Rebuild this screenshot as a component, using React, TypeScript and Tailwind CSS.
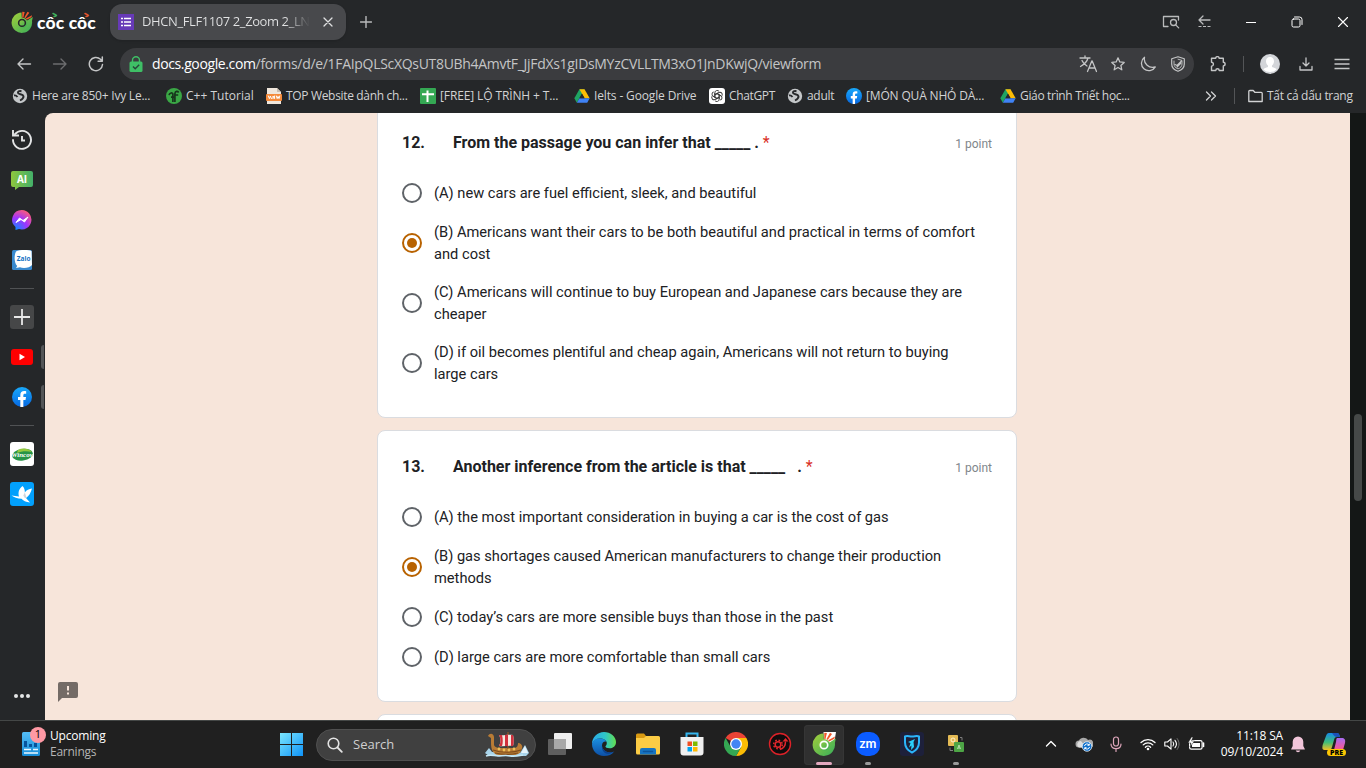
import React from "react";

type Kids = { children?: React.ReactNode };

const line = {
  fill: "none",
  stroke: "currentColor",
  strokeLinecap: "round" as const,
  strokeLinejoin: "round" as const,
};

/* ---------- brand marks ---------- */

function CocCocMark({ size, gap, id }: { size: number; gap: string; id: string }) {
  return (
    <svg width={size} height={size} viewBox="0 0 24 24">
      <defs>
        <linearGradient id={id} x1="0" y1="0" x2="1" y2="1">
          <stop offset="0" stopColor="#a5cf3a" />
          <stop offset="1" stopColor="#35ad5b" />
        </linearGradient>
      </defs>
      <path d="M11.500 0H24L22 12l-10 1z" fill={gap} />
      <path fill={`url(#${id})`} d="M11.500 1.500A11.200 11.200 0 1 0 22.900 11L23.800 6.500l-5.800 3.700-6 2.800z" />
      <circle cx="12" cy="13" r="6" fill={`url(#${id})`} />
      <circle cx="12" cy="13" r="3.700" fill="none" stroke={gap} strokeWidth="1.700" />
      <path d="M12.300.8l2.600.3-1.400 6h-1.300z" fill="#f0592a" />
      <path d="M18 .8l2 1.200-4.300 6-1.200-.9z" fill="#f0592a" />
      <path d="M23 4.500l-.6 2.300-5.300 2.700-.9-1.200z" fill="#f0592a" />
    </svg>
  );
}

function Globe() {
  return (
    <svg width="16" height="16" viewBox="0 0 16 16">
      <circle cx="8" cy="8" r="7.200" fill="#c4c7c9" />
      <path
        d="M9.500 3.200c-2.500-.5-4 .300-3.500 1.800.5 1.600 5 1 5.500 3.200.3 1.800-1.500 3.300-3.500 4.300M2 7.500c1.500-.5 2.500.2 3.500 1.500"
        fill="none"
        stroke="#27292b"
        strokeWidth="1.900"
      />
    </svg>
  );
}

function FacebookMark({ size, id }: { size: number; id: string }) {
  return (
    <svg width={size} height={size} viewBox="0 0 24 24">
      <defs>
        <linearGradient id={id} x1="0" y1="0" x2="0" y2="1">
          <stop offset="0" stopColor="#19a9fb" />
          <stop offset="1" stopColor="#0668e1" />
        </linearGradient>
      </defs>
      <circle cx="12" cy="12" r="12" fill={`url(#${id})`} />
      <path
        d="M10 24v-8.300H7.200V12H10V9.800c0-3.200 1.700-4.900 4.600-4.900.9 0 1.700.1 2.400.2v3.100h-1.500c-1.400 0-1.900.7-1.900 1.900V12h3.200l-.6 3.700h-2.600V24z"
        fill="#fff"
      />
    </svg>
  );
}

function Drive() {
  return (
    <svg width="16" height="16" viewBox="0 0 24 24">
      <path d="M8.200 2h7.600L8 15.500 4.200 22 .5 15.500z" fill="#1fa463" />
      <path d="M8.200 2h7.600l7.700 13.500h-7.600z" fill="#fcbc05" />
      <path d="M8.100 15.500h15.400L19.800 22H4.300z" fill="#3f82f5" />
      <path d="M12 8.600l3.900 6.900H8.100z" fill="#27292b" />
    </svg>
  );
}

function Cpp() {
  return (
    <svg width="16" height="16" viewBox="0 0 16 16">
      <circle cx="8" cy="8" r="8" fill="#3aa745" />
      <path
        d="M6.900 14V6.200c0-1.900-3.600-1.600-3.800.9M8.900 14V5.600c.3-2.600 2.700-2.800 3.800-1.200M5 9.200h3M9 7h3.200"
        fill="none"
        stroke="#17351c"
        strokeWidth="1.700"
      />
    </svg>
  );
}

function DocMark() {
  return (
    <svg width="16" height="16" viewBox="0 0 16 16">
      <path d="M1 0h10l4 4v12H1z" fill="#efe6dc" />
      <path d="M11 0l4 4h-4z" fill="#c9bdb0" />
      <rect y="6" width="16" height="7" rx="1" fill="#f58a3a" />
      <path d="M2.400 8l1 2.600 1-2.600 1 2.600M7 10.600V8l1.600 2.600V8M10.400 8l.8 2.600L12 8.400l1 2.200.8-2.600" {...line} stroke="#fff" strokeWidth="1" />
    </svg>
  );
}

function Sheets() {
  return (
    <svg width="16" height="16" viewBox="0 0 16 16">
      <rect width="16" height="16" rx="1" fill="#34a853" />
      <path d="M2 6.200h12M7.500 2.500v11.500" stroke="#fff" strokeWidth="2" />
    </svg>
  );
}

function Gpt() {
  return (
    <svg width="16" height="16" viewBox="0 0 16 16">
      <rect width="16" height="16" rx="3" fill="#fff" />
      <g fill="none" stroke="#333" strokeWidth="0.9">
        {[0, 60, 120, 180, 240, 300].map((a) => (
          <path key={a} transform={`rotate(${a} 8 8)`} d="M5.900 9.200V4.700a2.300 2.300 0 0 1 4.300-1.100M8 5.500l3.700 2.100" />
        ))}
      </g>
    </svg>
  );
}

/* ---------- browser chrome ---------- */

function TabStrip() {
  return (
    <div className="flex h-11 shrink-0 items-center">
      <div className="flex w-[110px] items-center pl-[11px]">
        <CocCocMark size={22} gap="#252729" id="cc1" />
        <span className="relative ml-1 mt-0.5 font-['Lato'] text-[17.5px] leading-5 font-black tracking-[0.15px] whitespace-nowrap text-white">
          côc côc
          <svg className="absolute -top-px left-0" width="62" height="8" viewBox="0 0 62 8">
            <path d="M16 1.500l3 1.500M17 4.500c1 0 2-.5 2.500-1" {...line} stroke="#3fae5a" strokeWidth="1.500" />
            <path d="M48 1.500l3 1.500M49 4.500c1 0 2-.5 2.500-1" {...line} stroke="#e0532c" strokeWidth="1.500" />
          </svg>
        </span>
      </div>
      <div className="flex h-9 w-[236px] items-center rounded-xl bg-[#48494c] pr-3 pl-2 shadow">
        <svg width="16" height="16" viewBox="0 0 16 16">
          <rect width="16" height="16" fill="#673ab7" />
          <path d="M3 4.500h2M3 8h2M3 11.500h2M6 4.500h7M6 8h7M6 11.500h7" stroke="#fff" strokeWidth="1.700" />
        </svg>
        <span className="ml-2 w-[168px] bg-gradient-to-r from-[#e3e4e5] from-85% to-transparent bg-clip-text text-[13px] tracking-[-0.4px] whitespace-nowrap text-transparent">
          DHCN_FLF1107 2_Zoom 2_LN
        </span>
        <svg className="ml-3" width="12" height="12" viewBox="0 0 12 12">
          <path d="M2 2l8 8M10 2l-8 8" {...line} stroke="#dfe0e1" strokeWidth="1.300" />
        </svg>
      </div>
      <svg className="ml-[14px] text-[#b9babb]" width="12" height="12" viewBox="0 0 12 12">
        <path d="M6 .5v11M.5 6h11" {...line} strokeWidth="1.400" />
      </svg>
      <div className="ml-auto flex items-center text-[#b9babb]">
        <svg width="18" height="14" viewBox="0 0 18 14">
          <path d="M6 11.500H1.500v-10h15V5" {...line} strokeWidth="1.300" />
          <circle cx="11.500" cy="7.500" r="3" {...line} strokeWidth="1.300" />
          <path d="M13.700 9.900l3 3" {...line} strokeWidth="1.300" />
        </svg>
        <svg className="ml-[17px]" width="16" height="14" viewBox="0 0 16 14">
          <path d="M13 5H2M6 1L2 5l4 4" {...line} strokeWidth="1.300" />
          <path d="M1.500 11.500H14" stroke="currentColor" strokeWidth="1.200" strokeDasharray="3 1.500" />
        </svg>
        <svg className="ml-8 text-white" width="12" height="12" viewBox="0 0 12 12">
          <path d="M1 6.500h10" stroke="currentColor" />
        </svg>
        <svg className="ml-[34px] text-white" width="12" height="12" viewBox="0 0 12 12">
          <rect x="1" y="3" width="8" height="8" rx="1.500" {...line} />
          <path d="M3.500 1H8.500a2.500 2.500 0 0 1 2.500 2.500V8.500" {...line} />
        </svg>
        <svg className="mr-[17px] ml-[34px] text-white" width="12" height="12" viewBox="0 0 12 12">
          <path d="M1.500 1.500l9 9M10.500 1.500l-9 9" {...line} strokeWidth="1.100" />
        </svg>
      </div>
    </div>
  );
}

function Toolbar() {
  return (
    <div className="flex h-10 shrink-0 items-center text-[#c4c5c6]">
      <svg className="ml-4" width="16" height="16" viewBox="0 0 16 16">
        <path d="M14.500 8H2M7 3L2 8l5 5" {...line} strokeWidth="1.400" />
      </svg>
      <svg className="ml-5 text-[#6c6d6f]" width="16" height="16" viewBox="0 0 16 16">
        <path d="M1.500 8H14M9 3l5 5-5 5" {...line} strokeWidth="1.400" />
      </svg>
      <svg className="ml-5" width="16" height="16" viewBox="0 0 16 16">
        <path d="M14.500 8.500a6.600 6.600 0 1 1-2-5.200L14 4.900M14.300 1v4.200h-4.200" {...line} strokeWidth="1.500" />
      </svg>
      <div className="ml-4 flex h-8 w-[1074px] items-center rounded-full bg-[#3b3c3f] pr-2 pl-[9px]">
        <svg width="14" height="16" viewBox="0 0 14 16">
          <path d="M3.500 6V4.200a3.500 3.500 0 0 1 7 0V6" fill="none" stroke="#3fbf66" strokeWidth="1.400" />
          <rect x=".5" y="5.500" width="13" height="10.500" rx="1.500" fill="#3fbf66" />
          <path d="M4 10.500l2.200 2.200 4-4" fill="none" stroke="#27443a" strokeWidth="1.400" />
        </svg>
        <span className="-mt-0.5 ml-[9px] text-[14px] whitespace-nowrap">
          <span className="tracking-[-0.38px] text-white">docs.google.com</span>
          <span className="tracking-[-0.31px]">/forms/d/e/1FAIpQLScXQsUT8UBh4AmvtF_JjFdXs1gIDsMYzCVLLTM3xO1JnDKwjQ/viewform</span>
        </span>
        <svg className="ml-auto" width="18" height="18" viewBox="0 0 18 18">
          <path d="M1 3h10M6 1v2M9 3c-1 4-4 6.500-7.500 8.500M3 5.500c1 2.500 3 4.300 5 5.500" {...line} strokeWidth="1.300" />
          <path d="M8.500 16.500L12.800 6h.4l4.300 10.500M10 13h6" {...line} strokeWidth="1.300" />
        </svg>
        <svg className="ml-[13px]" width="16" height="16" viewBox="0 0 16 16">
          <path d="M8 1.800l1.800 4.100 4.400.5-3.300 3 .9 4.400L8 11.500l-3.800 2.300.9-4.400-3.300-3 4.400-.5z" {...line} strokeWidth="1.300" />
        </svg>
        <svg className="ml-[14px]" width="16" height="16" viewBox="0 0 16 16">
          <path d="M4.500 1.300a8.300 8.300 0 0 0 10.800 9.600A7.400 7.400 0 1 1 4.500 1.300z" {...line} strokeWidth="1.300" />
        </svg>
        <svg className="ml-[14px]" width="16" height="16" viewBox="0 0 16 16">
          <path d="M8 .8l6.300 2V8c0 3.700-2.500 6-6.300 7.300C4.200 14 1.700 11.700 1.700 8V2.800z" {...line} strokeWidth="1.200" />
          <path d="M8 3.200l4 1.200v3.500c0 2.400-1.400 4-4 5-2.600-1-4-2.600-4-5V5" {...line} strokeWidth=".9" />
          <path d="M5 8.500l2 1L11.500 5M7 11l4-4" {...line} strokeWidth="1.200" />
        </svg>
      </div>
      <svg className="ml-4" width="16" height="16" viewBox="0 0 16 16">
        <path
          d="M1.500 2.300h4.200a1.700 1.700 0 0 1 3.400 0h4.200v4a1.800 1.800 0 0 1 0 3.600v4.600H9.200a1.700 1.700 0 0 0-3.400 0H1.500v-4.400a1.900 1.900 0 0 0 0-3.800z"
          {...line}
          strokeWidth="1.400"
        />
      </svg>
      <span className="ml-[17px] h-4 w-px bg-[#535557]" />
      <svg className="ml-4" width="20" height="20" viewBox="0 0 20 20">
        <circle cx="10" cy="10" r="10" fill="#d3d5d9" />
        <path d="M10 3c2.700 0 4 1.800 4 4.200 0 1.800-.8 3.300-2 4.200v1.700c2 .5 3.600 1.200 4.700 2.300a10 10 0 0 1-13.400 0c1.100-1.100 2.700-1.800 4.700-2.300v-1.700c-1.200-.9-2-2.400-2-4.200C6 4.800 7.300 3 10 3z" fill="#fff" />
      </svg>
      <svg className="ml-[18px]" width="16" height="16" viewBox="0 0 16 16">
        <path d="M8 2v8M5 7l3 3 3-3M2 10.500V14h12v-3.500" {...line} strokeWidth="1.300" />
      </svg>
      <svg className="ml-5" width="16" height="16" viewBox="0 0 16 16">
        <path d="M.5 3.500h15M.5 8h15M.5 12.500h15" stroke="currentColor" strokeWidth="1.300" />
      </svg>
    </div>
  );
}

function Bookmark({ icon, width, children }: { icon: React.ReactNode; width: string } & Kids) {
  return (
    <div className={`flex shrink-0 items-center gap-1 whitespace-nowrap ${width}`}>
      {icon}
      {children}
    </div>
  );
}

function BookmarksBar() {
  return (
    <div className="flex h-[29px] shrink-0 items-center pb-[5px] pl-3 text-[12px] text-[#d2d3d4]">
      <Bookmark icon={<Globe />} width="w-[154px]"><span className="tracking-[-0.22px]">Here are 850+ Ivy Le...</span></Bookmark>
      <Bookmark icon={<Cpp />} width="w-[100px]"><span className="tracking-[0.02px]">C++ Tutorial</span></Bookmark>
      <Bookmark icon={<DocMark />} width="w-[154px]"><span className="tracking-[-0.33px]">TOP Website dành ch...</span></Bookmark>
      <Bookmark icon={<Sheets />} width="w-[154px]"><span className="tracking-[-0.12px]">[FREE] LỘ TRÌNH + T...</span></Bookmark>
      <Bookmark icon={<Drive />} width="w-[135px]"><span className="tracking-[-0.14px]">Ielts - Google Drive</span></Bookmark>
      <Bookmark icon={<Gpt />} width="w-[78px]"><span className="tracking-[-0.35px]">ChatGPT</span></Bookmark>
      <Bookmark icon={<Globe />} width="w-[59px]"><span className="tracking-[-0.3px]">adult</span></Bookmark>
      <Bookmark icon={<FacebookMark size={16} id="fb1" />} width="w-[154px]"><span className="tracking-[-0.16px]">[MÓN QUÀ NHỎ DÀ...</span></Bookmark>
      <Bookmark icon={<Drive />} width="w-[130px]"><span className="tracking-[-0.33px]">Giáo trình Triết học...</span></Bookmark>
      <svg className="ml-auto" width="12" height="12" viewBox="0 0 12 12">
        <path d="M1.500 2l4 4-4 4M6.500 2l4 4-4 4" {...line} strokeWidth="1.300" />
      </svg>
      <span className="ml-[17px] h-4 w-px bg-[#535557]" />
      <svg className="ml-[13px]" width="15" height="14" viewBox="0 0 15 14">
        <path d="M.8 12.500v-10a1 1 0 0 1 1-1h3.400l1.600 1.800h6.400a1 1 0 0 1 1 1v8.200z" {...line} strokeWidth="1.300" />
      </svg>
      <span className="ml-1 w-[99px] tracking-[-0.3px] whitespace-nowrap">Tất cả dấu trang</span>
    </div>
  );
}

/* ---------- side bar ---------- */

function Slot({ children }: Kids) {
  return <div className="flex h-10 w-full items-center justify-center">{children}</div>;
}

function OpenSlot({ children }: Kids) {
  return (
    <div className="flex w-full items-center pl-[3px]">
      <Slot>{children}</Slot>
      <span className="h-6 w-[3px] shrink-0 rounded-l bg-[#535557]" />
    </div>
  );
}

function Rule() {
  return (
    <div className="flex h-[17px] w-full shrink-0 items-center justify-center">
      <span className="h-px w-6 bg-[#505254]" />
    </div>
  );
}

function SideBar() {
  return (
    <aside className="flex w-11 shrink-0 flex-col items-center pt-[7px]">
      <Slot>
        <svg width="22" height="22" viewBox="0 0 22 22">
          <path d="M4 5.200A9 9 0 1 1 2 11" {...line} stroke="#e4e5e6" strokeWidth="1.900" />
          <path d="M2 1v5.500h6" fill="none" stroke="#e4e5e6" strokeWidth="1.900" />
          <path d="M11 7v4.500h3" fill="none" stroke="#e4e5e6" strokeWidth="1.900" />
        </svg>
      </Slot>
      <Slot>
        <svg width="22" height="20" viewBox="0 0 22 20">
          <defs>
            <linearGradient id="ai" x1="0" x2="1">
              <stop offset="0" stopColor="#8ec63d" />
              <stop offset="1" stopColor="#43b06a" />
            </linearGradient>
          </defs>
          <path d="M2 1h18a2 2 0 0 1 2 2v12a2 2 0 0 1-2 2H8l-4 3v-3H2a2 2 0 0 1-2-2V3a2 2 0 0 1 2-2z" fill="url(#ai)" />
          <text x="11" y="12.500" textAnchor="middle" fill="#fff" fontSize="10" fontWeight="700" fontFamily="Open Sans">AI</text>
        </svg>
      </Slot>
      <Slot>
        <svg width="20" height="20" viewBox="0 0 20 20">
          <defs>
            <radialGradient id="ms" cx=".2" cy="1" r="1.100">
              <stop offset="0" stopColor="#0a8cff" />
              <stop offset=".55" stopColor="#a033ff" />
              <stop offset="1" stopColor="#ff5c76" />
            </radialGradient>
          </defs>
          <path d="M10 0a9.700 9.700 0 1 1-3 19L3.500 20v-3A9.700 9.700 0 0 1 10 0z" fill="url(#ms)" />
          <path d="M4 12.500l3.500-4.500 3.500 2.500 5-3.500-3.500 5-3.500-2.500z" fill="#fff" stroke="#fff" strokeLinejoin="round" />
        </svg>
      </Slot>
      <Slot>
        <svg width="20" height="20" viewBox="0 0 20 20">
          <rect width="20" height="20" rx="1.500" fill="#3989ce" />
          <path d="M4 1.500C7-.3 17-.2 19.500 1L20 15c-2 3-9 3.600-12 2.200l-4 .8 1.200-2C2 13 2 5 4 1.500z" fill="#fff" />
          <text x="11.700" y="11" textAnchor="middle" fill="#1572c4" fontSize="6.500" fontWeight="700" fontFamily="Open Sans">Zalo</text>
        </svg>
      </Slot>
      <Rule />
      <Slot>
        <div className="flex size-6 items-center justify-center rounded-[3px] bg-[#464748]">
          <svg width="16" height="16" viewBox="0 0 16 16">
            <path d="M8 0v16M0 8h16" stroke="#e8e8e8" strokeWidth="1.800" />
          </svg>
        </div>
      </Slot>
      <OpenSlot>
        <svg width="22" height="16" viewBox="0 0 22 16">
          <rect width="22" height="16" rx="3" fill="#f00" />
          <path d="M8.500 4.800l5.500 3.200-5.500 3.200z" fill="#fff" />
        </svg>
      </OpenSlot>
      <OpenSlot>
        <FacebookMark size={20} id="fb2" />
      </OpenSlot>
      <Rule />
      <Slot>
        <svg width="24" height="24" viewBox="0 0 24 24">
          <rect width="24" height="24" rx="3" fill="#fff" />
          <ellipse cx="12.500" cy="12.700" rx="10.500" ry="5.800" fill="#279447" transform="rotate(-8 12.500 12.700)" />
          <path d="M8 8c5-2.500 11-1.500 14 2-5-1-10-1-15 1z" fill="#94c83d" />
          <text x="12" y="15" textAnchor="middle" fill="#fff" fontSize="7" fontWeight="700" fontStyle="italic" fontFamily="Liberation Serif">Wincov</text>
        </svg>
      </Slot>
      <Slot>
        <svg width="24" height="24" viewBox="0 0 24 24">
          <rect width="24" height="24" rx="3" fill="#02a0fc" />
          <path d="M1.500 13.500l7.500 1C8 11 8.500 7 12.500 4c2 2 2.500 4.500 2.300 6.500C16.500 8 19 6.800 22 6.500c-1.200 4.500-3 7.500-6 9.500l4 4.500c-4-.5-7-1.700-8.500-3.700C7.500 16.500 4 15.500 1.500 13.500z" fill="#fff" />
          <path d="M14.800 10.500l1.700 5-1.500.8-1.700-2.800z" fill="#cfd6dc" />
        </svg>
      </Slot>
      <div className="mt-auto mb-[22px] flex gap-0.5">
        <span className="size-1 rounded-full bg-[#e4e5e6]" />
        <span className="size-1 rounded-full bg-[#e4e5e6]" />
        <span className="size-1 rounded-full bg-[#e4e5e6]" />
      </div>
    </aside>
  );
}

/* ---------- form ---------- */

type Option = { lines: string[]; checked?: boolean };

function Question({ number, title, options }: { number: string; title: React.ReactNode; options: Option[] }) {
  return (
    <section className="w-[640px] shrink-0 rounded-lg border border-[#dadce0] bg-white px-6 pt-6 pb-6 text-[#202124]">
      <div className="mb-[18px] flex h-6 items-center text-base font-bold">
        <span className="w-[51px]">{number}</span>
        <h2 className="whitespace-pre">{title}<span className="font-normal text-[#d93025]"> *</span></h2>
        <span className="mt-px ml-auto text-xs font-normal text-[#80868b]">1 point</span>
      </div>
      {options.map((o) => (
        <label key={o.lines[0]} className={`flex items-center gap-3 ${o.lines.length > 1 ? "h-[60px]" : "h-10"}`}>
          <span
            className={`flex size-5 shrink-0 items-center justify-center rounded-full border-2 ${
              o.checked ? "border-[#b86200]" : "border-[#5f6368]"
            }`}
          >
            {o.checked && <span className="size-2.5 rounded-full bg-[#b86200]" />}
          </span>
          <span className="text-[14.667px] leading-[22px] whitespace-nowrap">
            {o.lines.map((l) => (
              <span key={l} className="block">{l}</span>
            ))}
          </span>
        </label>
      ))}
    </section>
  );
}

function FormPage() {
  return (
    <main className="ml-px flex min-w-0 flex-1 overflow-hidden rounded-tl-lg bg-[#141716] font-['Roboto',sans-serif]">
      <div className="relative flex h-[607px] flex-1 flex-col items-start gap-3 overflow-hidden bg-[#f7e5da] pl-[332px]">
        <div className="-mt-[7px]">
          <Question
            number="12."
            title="From the passage you can infer that _____ ."
            options={[
              { lines: ["(A) new cars are fuel efficient, sleek, and beautiful"] },
              { lines: ["(B) Americans want their cars to be both beautiful and practical in terms of comfort", "and cost"], checked: true },
              { lines: ["(C) Americans will continue to buy European and Japanese cars because they are", "cheaper"] },
              { lines: ["(D) if oil becomes plentiful and cheap again, Americans will not return to buying", "large cars"] },
            ]}
          />
        </div>
        <Question
          number="13."
          title="Another inference from the article is that _____   ."
          options={[
            { lines: ["(A) the most important consideration in buying a car is the cost of gas"] },
            { lines: ["(B) gas shortages caused American manufacturers to change their production", "methods"], checked: true },
            { lines: ["(C) today’s cars are more sensible buys than those in the past"] },
            { lines: ["(D) large cars are more comfortable than small cars"] },
          ]}
        />
        <section className="h-10 w-[640px] shrink-0 rounded-lg border border-[#dadce0] bg-white" />
        <svg className="absolute bottom-[18px] left-[13px]" width="20" height="20" viewBox="0 0 20 20">
          <path d="M2 0h16a2 2 0 0 1 2 2v12a2 2 0 0 1-2 2H4l-4 4V2a2 2 0 0 1 2-2z" fill="#746b66" />
          <path d="M10 4v4.500M10 10.500v2" stroke="#f7e5da" strokeWidth="2" />
        </svg>
      </div>
      <div className="flex w-4 justify-center pt-[301px]">
        <span className="h-[87px] w-2 rounded-full bg-[#464948]" />
      </div>
    </main>
  );
}

/* ---------- task bar ---------- */

function TaskSlot({ children, active, mark }: Kids & { active?: boolean; mark?: boolean }) {
  return (
    <div className={`relative mx-0.5 flex h-10 w-10 shrink-0 items-center justify-center rounded pb-px ${active ? "bg-[#303030] ring-1 ring-[#363636] ring-inset" : ""}`}>
      {children}
      {active && <span className="absolute bottom-0 h-[3px] w-4 rounded-full bg-[#e4a9c0]" />}
      {mark && <span className="absolute bottom-0 h-[3px] w-1.5 rounded-full bg-[#9a9a9a]" />}
    </div>
  );
}

function Ship() {
  return (
    <svg width="46" height="26" viewBox="0 0 46 26">
      <path d="M1 21l4-5 3 4 28 1 5-8 4 8-3 3H5z" fill="#a9d4ea" />
      <path d="M37 21l4-7 3 7z" fill="#e7f4fb" />
      <path d="M4 4c2-4 6-2 6 1v8c1 3 5 3 9 3h10c4 0 5-2 5-5 3 0 5 3 4 5-1 5-4 7-8 7H15c-6 0-8-6-8-12V6z" fill="#b97c35" />
      <path d="M9 18c8 3 20 3 28 0M11 21c8 2 15 2 23 0" fill="none" stroke="#7d4d1d" strokeWidth="1.200" />
      <path d="M24 0v17" stroke="#8a5628" strokeWidth="1.300" />
      <path d="M15 3c4 1 9-1 14 0 1 4 1 8 0 11-5-1-9 1-14 0 2-4 2-7 0-11z" fill="#f5e9e1" />
      <path d="M15 3h3c1 4 1 8 0 11h-3c2-4 2-7 0-11zM21 3l3-.5V14h-3zM27 3h2c1 4 1 8 0 11h-2z" fill="#d1313d" />
      <g fill="#edc059"><circle cx="15" cy="17" r="1.400" /><circle cx="20" cy="18" r="1.400" /><circle cx="25" cy="18" r="1.400" /><circle cx="30" cy="17" r="1.400" /></g>
      <path d="M2 24c5-2 8 0 12 0s8-1 12 0 8 0 13-1" fill="none" stroke="#c4e8f7" strokeWidth="1.500" />
    </svg>
  );
}

function TaskBar() {
  return (
    <footer className="flex h-12 shrink-0 items-center border-t border-[#444746] bg-[#202020]">
      <div className="relative ml-[22px] h-[26px] w-[18px]">
        <svg width="18" height="24" viewBox="0 0 18 24">
          <defs>
            <linearGradient id="wd" x1="0" y1="0" x2="0" y2="1">
              <stop offset="0" stopColor="#54bdf5" />
              <stop offset="1" stopColor="#158bd6" />
            </linearGradient>
          </defs>
          <rect width="18" height="24" rx="1.500" fill="url(#wd)" />
          <path d="M2 15V9h3v6zM7 15v-3h3v3zM12 15v-4h3v4z" fill="#07539c" />
          <path d="M2 17.500h7M11 17.500h5M2 21h14" stroke="#e9f7ff" strokeWidth="1.700" />
        </svg>
        <span className="absolute -top-[5px] left-2 flex size-4 items-center justify-center rounded-full bg-[#ff99a4] text-[11px] text-black">1</span>
      </div>
      <div className="mb-0.5 ml-[10px] w-[218px] text-[12px] leading-4">
        <div className="tracking-[-0.2px] text-white">Upcoming</div>
        <div className="tracking-[-0.25px] text-[#b5b5b5]">Earnings</div>
      </div>
      <svg className="ml-3" width="23" height="23" viewBox="0 0 23 23">
        <defs>
          <linearGradient id="wn" x1="0" y1="0" x2="1" y2="1">
            <stop offset="0" stopColor="#7be6fd" />
            <stop offset="1" stopColor="#0f93f8" />
          </linearGradient>
        </defs>
        <path d="M0 0h11v11H0zM12 0h11v11H12zM0 12h11v11H0zM12 12h11v11H12z" fill="url(#wn)" />
      </svg>
      <div className="ml-[13px] flex h-8 w-[220px] items-center rounded-full border border-[#505050] bg-[#404040] pr-[5px] pl-[10px]">
        <svg width="16" height="16" viewBox="0 0 16 16">
          <circle cx="6.500" cy="6.500" r="5.300" fill="none" stroke="#e3e3e3" strokeWidth="1.600" />
          <path d="M10.500 10.500l4.300 4.300" stroke="#e3e3e3" strokeWidth="1.800" strokeLinecap="round" />
        </svg>
        <span className="ml-[10px] text-[13px] text-[#cfcfcf]">Search</span>
        <span className="ml-auto"><Ship /></span>
      </div>
      <div className="ml-0.5 flex">
        <TaskSlot>
          <svg width="24" height="22" viewBox="0 0 24 22">
            <rect x="6" width="18" height="16" rx="1" fill="#eee" />
            <rect y="6" width="18" height="16" rx="1" fill="#666" opacity=".9" />
            <rect x="6" y="6" width="12" height="10" fill="#a8a8a8" />
          </svg>
        </TaskSlot>
        <TaskSlot>
          <svg width="24" height="24" viewBox="0 0 24 24">
            <defs>
              <linearGradient id="e1" x1="0" x2="1"><stop offset="0" stopColor="#29a9ea" /><stop offset=".55" stopColor="#2fc6c7" /><stop offset="1" stopColor="#63df50" /></linearGradient>
              <linearGradient id="e2" x1="0" x2="0" y1="0" y2="1"><stop offset="0" stopColor="#1b8fe0" /><stop offset="1" stopColor="#0d4fa5" /></linearGradient>
            </defs>
            <path d="M0 12C0 5 5.500 0 12 0s12 4.700 12 10c0 4-3 6.300-6.500 6.300-2.600 0-4.100-.9-4.100-1.700 0-.7 1.400-1.200 1.400-3.600C14.800 8.500 11.500 6.500 8 6.500 4.500 6.500 1.500 8.500 0 12z" fill="url(#e1)" />
            <path d="M0 12c1-3.500 4-5.500 8-5.500 3 0 6 1.600 6.600 3.500-1.800-1.200-4.600.2-4.600 3.600 0 4 4 6.900 8 6.900 2 0 3.500-.8 4.300-1.300C20 22.500 16.500 24 12 24 5 24 0 18.500 0 12z" fill="url(#e2)" />
            <path d="M10 13.500C9 19 14 23 18 21.500c2-.6 3.500-1.500 4.300-2.300-.8.5-2.300 1.300-4.300 1.300-4 0-7.700-3-8-7z" fill="#0b3f8c" />
          </svg>
        </TaskSlot>
        <TaskSlot>
          <svg width="24" height="22" viewBox="0 0 24 22">
            <path d="M0 2a1.500 1.500 0 0 1 1.500-1.500H8L10 3v6H0z" fill="#d99a12" />
            <path d="M0 5h8l2-2h12.500A1.500 1.500 0 0 1 24 4.500V20a1.500 1.500 0 0 1-1.500 1.500h-21A1.500 1.500 0 0 1 0 20z" fill="#fccc45" />
            <path d="M4 21.500V17a2 2 0 0 1 2-2h12a2 2 0 0 1 2 2v4.500z" fill="#1674c2" />
            <path d="M7.500 18.500h9" stroke="#0d559c" strokeWidth="1.500" strokeLinecap="round" />
          </svg>
        </TaskSlot>
        <TaskSlot>
          <svg width="24" height="24" viewBox="0 0 24 24">
            <path d="M6.500 6V1.500h11V6" fill="none" stroke="#35b5ee" strokeWidth="2" />
            <path d="M.5 5h23v15.500a3 3 0 0 1-3 3h-17a3 3 0 0 1-3-3z" fill="#f0f0f0" />
            <path d="M7.500 9.500H12V14H7.500z" fill="#f25022" /><path d="M13 9.500h4.500V14H13z" fill="#7fba00" />
            <path d="M7.500 15H12v4.500H7.500z" fill="#00a4ef" /><path d="M13 15h4.500v4.500H13z" fill="#ffb900" />
          </svg>
        </TaskSlot>
        <TaskSlot>
          <svg width="24" height="24" viewBox="0 0 24 24">
            <path d="M12 12L1.600 6A12 12 0 0 1 22.400 6z" fill="#ea4335" />
            <path d="M12 12V6h10.400A12 12 0 0 1 12 24l5.200-9z" fill="#fbbc05" />
            <path d="M12 12l5.200 3L12 24A12 12 0 0 1 1.600 6l5.200 9z" fill="#34a853" />
            <circle cx="12" cy="12" r="6" fill="#fff" /><circle cx="12" cy="12" r="4.700" fill="#4285f4" />
          </svg>
        </TaskSlot>
        <TaskSlot>
          <svg width="24" height="24" viewBox="0 0 24 24">
            <circle cx="12" cy="12" r="10.500" fill="#100c0d" stroke="#dd2228" strokeWidth="1.400" />
            <circle cx="10" cy="12.500" r="2.800" fill="none" stroke="#e1272c" strokeWidth="1.500" />
            <circle cx="10" cy="12.500" r="4.300" fill="none" stroke="#e1272c" strokeWidth="1.500" strokeDasharray="1.700 1.680" />
            <path d="M12 17.500c4-1 5.500-3 5.500-8" fill="none" stroke="#e1272c" strokeWidth="1.500" />
            <path d="M14.500 9.500l3-3.500 3 3.500z" fill="#e1272c" />
          </svg>
        </TaskSlot>
        <TaskSlot active><CocCocMark size={24} gap="#ffffff" id="cc2" /></TaskSlot>
        <TaskSlot mark>
          <div className="flex size-6 items-center justify-center rounded-[10px] bg-[#0b5cff] pb-[2px] font-['Lato'] text-[13px] leading-none font-bold text-white">zm</div>
        </TaskSlot>
        <TaskSlot>
          <svg width="24" height="24" viewBox="0 0 24 24">
            <rect width="24" height="24" rx="3" fill="#1d203b" />
            <path d="M12 4.500c3 0 5-1 7 0v6c0 5-3 8-7 10-4-2-7-5-7-10v-6c2-1 4 0 7 0z" fill="none" stroke="#2bb5fb" strokeWidth="2" />
            <path d="M8 10l7-3-1.500 3 .5 5-3 3 .5-4.500-2.500 2 1.500-4.500z" fill="#2bd0fb" />
          </svg>
        </TaskSlot>
        <TaskSlot mark>
          <svg width="18" height="18" viewBox="0 0 18 18">
            <rect x="1" width="10" height="11" rx="1" fill="#e4bb55" />
            <circle cx="6" cy="5" r="2" fill="none" stroke="#fff2cf" />
            <rect x="7" y="7" width="10" height="10" rx="1" fill="#4da545" />
            <path d="M10.500 14l1.500-4 1.500 4M11 13h2" fill="none" stroke="#cbe8c2" strokeWidth=".8" />
            <path d="M13 2.500h2v3M3 12.500v3h3" fill="none" stroke="#7e7e7e" />
          </svg>
        </TaskSlot>
      </div>
      <div className="mb-px ml-auto flex items-center text-white">
        <svg className="mr-px" width="12" height="12" viewBox="0 0 12 12"><path d="M1.500 8L6 3.500 10.500 8" {...line} strokeWidth="1.400" /></svg>
        <svg className="ml-[17px]" width="18" height="16" viewBox="0 0 18 16">
          <path d="M4 11.500a3.500 3.500 0 0 1 0-7A5.300 5.300 0 0 1 13 4a4 4 0 0 1 3 7.500z" fill="#a8a8a8" />
          <path d="M4 11.500A3.500 3.500 0 0 1 6 5l5 6.500z" fill="#dedede" />
          <circle cx="12" cy="10.500" r="4.800" fill="#1372cc" stroke="#fff" strokeWidth=".7" />
          <path d="M9.500 10a2.500 2.500 0 0 1 4.500-1M14.500 11a2.500 2.500 0 0 1-4.500 1M14.300 7.500V9.300h-1.800M9.700 13.500v-1.800h1.800" fill="none" stroke="#fff" />
        </svg>
        <svg className="ml-[15px] text-[#dda5ba]" width="16" height="16" viewBox="0 0 16 16">
          <rect x="5.500" y="1" width="5" height="9" rx="2.500" {...line} strokeWidth="1.200" />
          <path d="M3 8c0 3 2 4.700 5 4.700S13 11 13 8M8 12.700V15.500" {...line} strokeWidth="1.200" />
        </svg>
        <svg className="ml-4" width="16" height="16" viewBox="0 0 16 16">
          <path d="M1 6.500a10 10 0 0 1 14 0M3.200 8.900a6.800 6.800 0 0 1 9.600 0M5.400 11.200a3.700 3.700 0 0 1 5.200 0" {...line} strokeWidth="1.300" />
          <circle cx="8" cy="13" r="1.300" fill="currentColor" />
        </svg>
        <svg className="ml-2" width="16" height="16" viewBox="0 0 16 16">
          <path d="M.8 6h2.700L7 2.800v10.400L3.500 10H.8zM9 6c1 1.300 1 2.700 0 4M11 4.300c1.900 2.400 1.900 5 0 7.400" {...line} strokeWidth="1.100" />
          <path d="M13.200 2.600c2.500 3.500 2.500 7.300 0 10.800" {...line} stroke="#757575" />
        </svg>
        <svg className="ml-2" width="17" height="14" viewBox="0 0 17 14">
          <rect x="1.600" y="3.600" width="12.500" height="8.500" rx="1.700" {...line} strokeWidth="1.200" />
          <path d="M4 6h8v4H4z" fill="currentColor" />
          <path d="M15.500 6v3.500" {...line} strokeWidth="1.600" />
          <path d="M3.500 0L0 6h3l-1 4 4.500-6h-3l1.500-4z" fill="currentColor" stroke="#202020" strokeWidth=".5" />
        </svg>
        <div className="mb-px ml-[10px] w-[68px] text-right text-[12px] leading-4 tracking-[-0.15px] whitespace-nowrap">
          <div>11:18 SA</div>
          <div>09/10/2024</div>
        </div>
        <svg className="ml-[7px]" width="16" height="17" viewBox="0 0 16 17">
          <path d="M8 .5a5.300 5.300 0 0 1 5.300 5.300V10l1.500 3v.6H1.200V13l1.500-3V5.800A5.300 5.300 0 0 1 8 .5zM5.700 14.500h4.600a2.400 2.400 0 0 1-4.600 0z" fill="#f2c6da" />
        </svg>
        <div className="relative mr-5 ml-4 h-6 w-6">
          <svg width="24" height="24" viewBox="0 0 24 24">
            <defs>
              <linearGradient id="c1" x1="0" y1="0" x2="0" y2="1"><stop offset="0" stopColor="#158ae8" /><stop offset=".55" stopColor="#3fbd78" /><stop offset="1" stopColor="#f2bf25" /></linearGradient>
              <linearGradient id="c2" x1="0" y1="0" x2="0" y2="1"><stop offset="0" stopColor="#a66bf2" /><stop offset=".6" stopColor="#ee5aa0" /><stop offset="1" stopColor="#f9984b" /></linearGradient>
            </defs>
            <path d="M7 1h8c2 0 2 1 3 4h-3c-2 0-2.500 1-3 3l-2 7c-.6 2-1 3-3 3H2.500C0 18 0 15 1 12L4 4c.7-2 1.500-3 3-3z" fill="url(#c1)" />
            <path d="M10 1h5c2 0 2 1 3 4h-3c-2 0-2.500-1-5-4z" fill="#1b50b8" />
            <path d="M15 6h5c3 0 3.600 2.500 3 5l-2 7c-.6 2.500-2 4-4 4H9c2 0 2.500-2 3-4l2-8c.4-1.500 0-3 1-4z" fill="url(#c2)" />
          </svg>
          <span className="absolute top-[17px] left-[5px] flex h-[7px] w-[19px] items-center justify-center rounded-sm bg-[#fdc703] text-[7px] leading-none font-extrabold text-black">PRE</span>
        </div>
      </div>
    </footer>
  );
}

export default function App() {
  return (
    <div className="flex h-[768px] w-[1366px] flex-col overflow-hidden bg-[#252729] font-['Open_Sans','Noto_Sans',sans-serif]">
      <TabStrip />
      <Toolbar />
      <BookmarksBar />
      <div className="flex h-[607px] shrink-0">
        <SideBar />
        <FormPage />
      </div>
      <TaskBar />
    </div>
  );
}
